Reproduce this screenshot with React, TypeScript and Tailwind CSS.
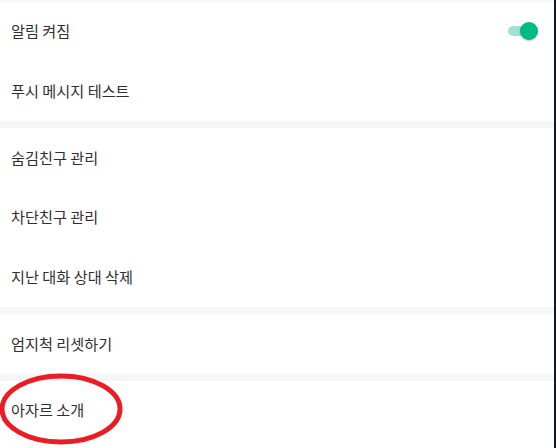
import { useState } from "react";

interface Row {
    label: string;
    toggle?: boolean;
}

const sections: Row[][] = [
    [{ label: "알림 켜짐", toggle: true }, { label: "푸시 메시지 테스트" }],
    [
        { label: "숨김친구 관리" },
        { label: "차단친구 관리" },
        { label: "지난 대화 상대 삭제" },
    ],
    [{ label: "엄지척 리셋하기" }],
    [{ label: "아자르 소개" }],
];

function Toggle({ on, onChange }: { on: boolean; onChange: () => void }) {
    return (
        <button
            onClick={onChange}
            className="relative w-[30px] h-[20px] flex items-center"
        >
            <span
                className={`absolute left-0 right-[2px] h-[10px] rounded-full ${
                    on ? "bg-[#a3e2cf]" : "bg-[#cfcfcf]"
                }`}
            />
            <span
                className={`absolute top-[1px] w-[18px] h-[18px] rounded-full shadow-[0_1px_2px_rgba(0,0,0,0.25)] ${
                    on ? "right-0 bg-[#00ba86]" : "left-0 bg-[#f5f5f5]"
                }`}
            />
        </button>
    );
}

export default function App() {
    const [notify, setNotify] = useState(true);

    return (
        <div
            className="relative w-[556px] h-[448px] overflow-hidden bg-[#f6f6f6] flex"
            style={{ fontFamily: '"Noto Sans CJK KR", "Noto Sans", sans-serif' }}
        >
            <div className="flex-1 flex flex-col pt-[2px] gap-[7px]">
                {sections.map((rows, i) => (
                    <div
                        key={i}
                        className={`bg-white flex flex-col ${
                            i === sections.length - 1 ? "flex-1" : ""
                        }`}
                    >
                        {rows.map((row) => (
                            <div
                                key={row.label}
                                className="h-[59.67px] shrink-0 flex items-center justify-between pl-[11px] pr-[16px] pb-[2px]"
                            >
                                <span className="text-[15.2px] leading-none text-[#303030]">
                                    {row.label}
                                </span>
                                {row.toggle && (
                                    <Toggle
                                        on={notify}
                                        onChange={() => setNotify(!notify)}
                                    />
                                )}
                            </div>
                        ))}
                    </div>
                ))}
            </div>
            <div className="w-[2px] bg-[#151828]" />

            {/* red marker annotation */}
            <svg
                className="absolute left-0 top-0 pointer-events-none"
                width="556"
                height="448"
            >
                <ellipse
                    cx="61"
                    cy="409"
                    rx="59"
                    ry="33"
                    fill="none"
                    stroke="#ec1c24"
                    strokeWidth="5"
                />
            </svg>
        </div>
    );
}
